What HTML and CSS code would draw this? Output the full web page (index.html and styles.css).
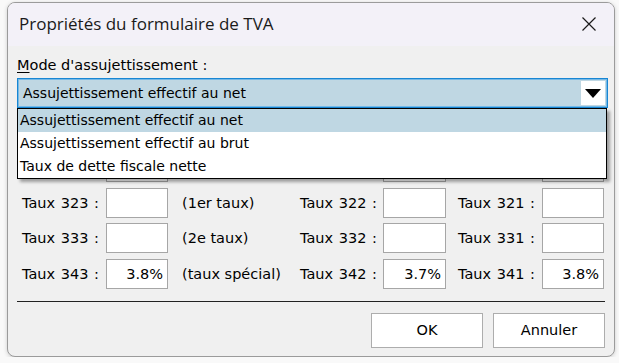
FILE: index.html
```html
<!DOCTYPE html>
<html lang="fr">
<head>
  <meta charset="UTF-8">
  <title>Propriétés du formulaire de TVA</title>
  <link rel="stylesheet" href="styles.css">
</head>
<body>

<div class="window">
  <div class="titlebar">
    <span class="title">Propriétés du formulaire de TVA</span>
    <svg class="close" width="16" height="16" viewBox="0 0 16 16">
      <path d="M1.5 1.5 L14.5 14.5 M14.5 1.5 L1.5 14.5" stroke="#1a1a1a" stroke-width="1.2" fill="none"/>
    </svg>
  </div>

  <div class="content">
    <div class="field-label"><u>M</u>ode d'assujettissement :</div>

    <div class="combo-wrap">
      <div class="combo">
        <span class="combo-text">Assujettissement effectif au net</span>
        <span class="combo-arrow">
          <svg width="16" height="9" viewBox="0 0 16 9"><path d="M0 0 H16 L8 9 Z" fill="#000"/></svg>
        </span>
      </div>
      <!-- liste déroulante ouverte -->
      <ul class="dropdown">
        <li class="selected">Assujettissement effectif au net</li>
        <li>Assujettissement effectif au brut</li>
        <li>Taux de dette fiscale nette</li>
      </ul>
    </div>

    <div class="rates">
      <!-- ligne cachée sous la liste -->
      <span class="lbl"></span><span class="box"></span><span class="note"></span>
      <span class="lbl"></span><span class="box"></span>
      <span class="lbl lbl3"></span><span class="box"></span>

      <span class="lbl">Taux 323 :</span><span class="box"></span><span class="note">(1er taux)</span>
      <span class="lbl">Taux 322 :</span><span class="box"></span>
      <span class="lbl lbl3">Taux 321 :</span><span class="box"></span>

      <span class="lbl">Taux 333 :</span><span class="box"></span><span class="note">(2e taux)</span>
      <span class="lbl">Taux 332 :</span><span class="box"></span>
      <span class="lbl lbl3">Taux 331 :</span><span class="box"></span>

      <span class="lbl">Taux 343 :</span><span class="box">3.8%</span><span class="note">(taux spécial)</span>
      <span class="lbl">Taux 342 :</span><span class="box">3.7%</span>
      <span class="lbl lbl3">Taux 341 :</span><span class="box">3.8%</span>
    </div>

    <div class="separator"></div>

    <div class="buttons">
      <button>OK</button>
      <button>Annuler</button>
    </div>
  </div>
</div>

</body>
</html>
```

FILE: styles.css
```css
body {
  margin: 0;
  background-color: #f9f9f9;
  font-family: "DejaVu Sans", Tahoma, sans-serif;
  font-size: 14px;
  color: #000;
}
.window {
  margin: 2px 0 0 7px;
  width: 606px;
  height: 353px;
  border: 1px solid #9b9b9b;
  border-radius: 8px;
  background-color: #f0f0f0;
  overflow: hidden;
  box-shadow: 0 1px 4px rgba(0,0,0,0.18);
}
.titlebar {
  height: 43px;
  background-color: #f3f1f8;
  display: flex;
  align-items: center;
  justify-content: space-between;
  padding: 0 17px 0 11px;
}
.title {
  font-family: "Open Sans", "Noto Sans", sans-serif;
  font-size: 17px;
  color: #1a1a1a;
  margin-top: -2px;
}
.close {
  margin-top: -2px;
}
.content {
  padding: 11px 0 0 9px;
}
.field-label {
  height: 21px;
  line-height: 17px;
  font-size: 14.5px;
}
.field-label u {
  text-decoration-thickness: 1px;
  text-underline-offset: 2px;
}
.combo-wrap {
  position: relative;
  width: 591px;
}
.combo {
  height: 30px;
  box-sizing: border-box;
  border: 1px solid #1886d3;
  box-shadow: inset 0 0 0 1px #76b9e6;
  background-color: #bfd7e3;
  display: flex;
  align-items: center;
  padding: 2px 2px 2px 0;
}
.combo-text {
  flex: 1;
  padding-left: 5px;
}
.combo-arrow {
  width: 24px;
  height: 100%;
  background-color: #fff;
  display: flex;
  align-items: center;
  justify-content: center;
}
.dropdown {
  position: absolute;
  top: 30px;
  left: 0;
  width: 590px;
  box-sizing: border-box;
  margin: 0;
  padding: 0;
  list-style: none;
  background-color: #fff;
  border: 1px solid #000;
  box-shadow: 3px 3px 3px rgba(0,0,0,0.35);
  z-index: 2;
}
.dropdown li {
  height: 23px;
  line-height: 22px;
  padding-left: 2px;
}
.dropdown li.selected {
  background-color: #bfd7e3;
}
.rates {
  display: grid;
  grid-template-columns: 84px 62px 132px 83px 63px 96px 62px;
  grid-auto-rows: 30px;
  row-gap: 5.5px;
  align-items: center;
  margin: 44px 0 0 5px;
  font-size: 14.5px;
}
.lbl {
  line-height: 30px;
  word-spacing: 1px;
}
.lbl3 {
  padding-left: 12px;
}
.note {
  padding-left: 14px;
}
.box {
  height: 30px;
  box-sizing: border-box;
  border: 1px solid #a6a6a6;
  background-color: #fff;
  text-align: right;
  padding: 0 4px;
  line-height: 28px;
}
.separator {
  width: 588px;
  height: 1px;
  background-color: #222;
  margin-top: 12px;
}
.buttons {
  display: flex;
  justify-content: flex-end;
  gap: 10px;
  width: 588px;
  margin-top: 11px;
}
button {
  width: 112px;
  height: 35px;
  border: 1px solid #adadad;
  background-color: #fff;
  font-family: "DejaVu Sans", Tahoma, sans-serif;
  font-size: 14.5px;
  color: #000;
  padding: 0;
}
```
